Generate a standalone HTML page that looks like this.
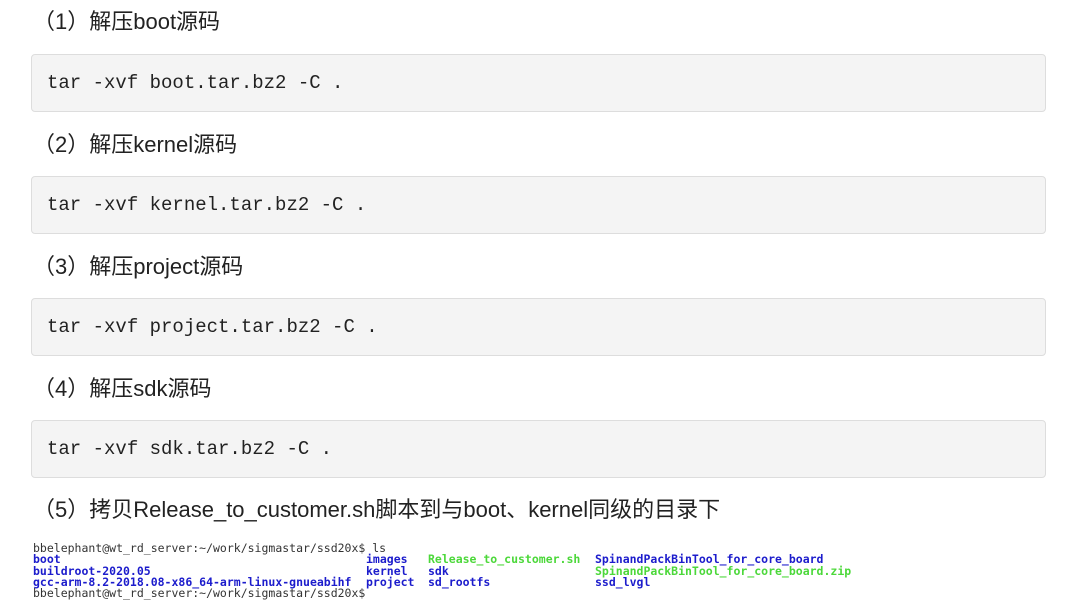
<!DOCTYPE html>
<html><head><meta charset="utf-8"><style>
body{margin:0;width:1091px;height:614px;background:#fff;overflow:hidden;position:relative;font-family:"Liberation Sans","Noto Sans CJK SC",sans-serif;}
.h{position:absolute;left:33px;font-size:22px;color:#222;line-height:26px;}
.c{position:absolute;left:31px;width:1015px;height:58px;background:#f4f4f4;border:1px solid #ddd;border-radius:4px;box-sizing:border-box;}
.c span{position:absolute;left:15px;top:17px;font-family:"Liberation Mono",monospace;font-size:19px;color:#222;line-height:22px;}
.t{position:absolute;font-family:"DejaVu Sans Mono","Liberation Mono",monospace;font-size:11.5px;line-height:11.3px;color:#333;white-space:pre;}
.b{color:#1c1ccc;font-weight:bold}.g{color:#4cd83a;font-weight:bold}
</style></head><body>
<div class="h" style="top:9px">（1）解压boot源码</div>
<div class="c" style="top:54px"><span>tar -xvf boot.tar.bz2 -C .</span></div>
<div class="h" style="top:132px">（2）解压kernel源码</div>
<div class="c" style="top:176px"><span>tar -xvf kernel.tar.bz2 -C .</span></div>
<div class="h" style="top:254px">（3）解压project源码</div>
<div class="c" style="top:298px"><span>tar -xvf project.tar.bz2 -C .</span></div>
<div class="h" style="top:376px">（4）解压sdk源码</div>
<div class="c" style="top:420px"><span>tar -xvf sdk.tar.bz2 -C .</span></div>
<div class="h" style="top:497px">（5）拷贝Release_to_customer.sh脚本到与boot、kernel同级的目录下</div>
<div class="t" style="left:33px;top:543px">bbelephant@wt_rd_server:~/work/sigmastar/ssd20x$ ls
<span class="b">boot</span>
<span class="b">buildroot-2020.05</span>
<span class="b">gcc-arm-8.2-2018.08-x86_64-arm-linux-gnueabihf</span>
bbelephant@wt_rd_server:~/work/sigmastar/ssd20x$</div>
<div class="t" style="left:366px;top:554.3px"><span class="b">images</span>
<span class="b">kernel</span>
<span class="b">project</span></div>
<div class="t" style="left:428px;top:554.3px"><span class="g">Release_to_customer.sh</span>
<span class="b">sdk</span>
<span class="b">sd_rootfs</span></div>
<div class="t" style="left:595px;top:554.3px"><span class="b">SpinandPackBinTool_for_core_board</span>
<span class="g">SpinandPackBinTool_for_core_board.zip</span>
<span class="b">ssd_lvgl</span></div>
</body></html>
